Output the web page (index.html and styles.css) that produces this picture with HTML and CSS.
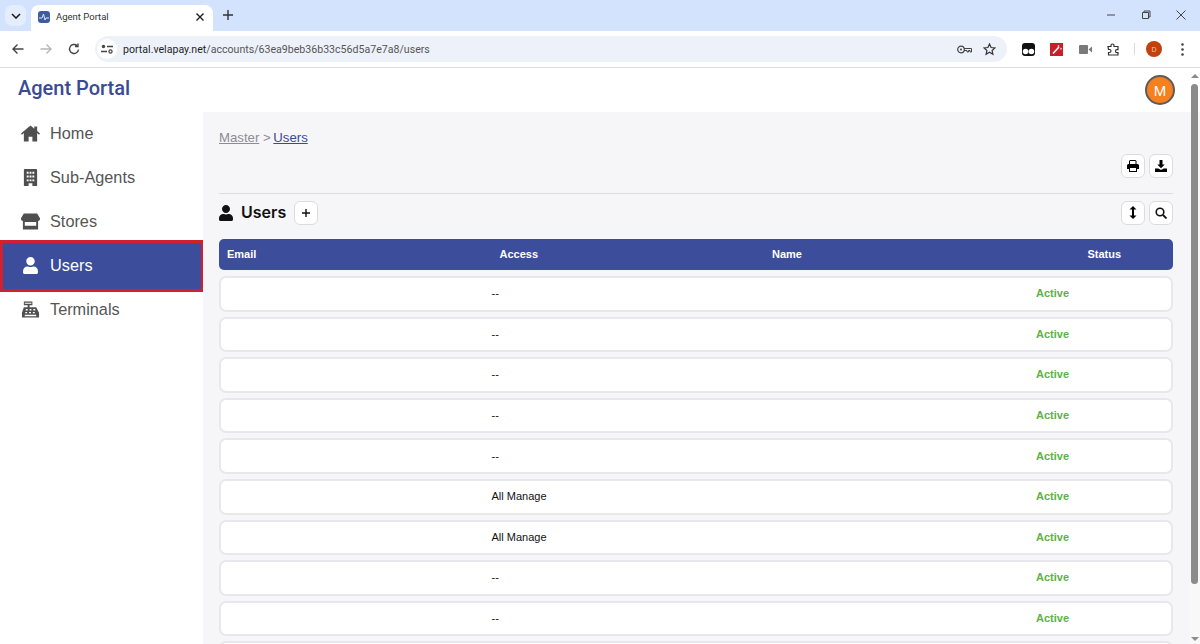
FILE: index.html
```html
<!DOCTYPE html>
<html lang="en">
<head>
  <meta charset="UTF-8">
  <title>Agent Portal</title>
  <link rel="stylesheet" href="styles.css">
</head>
<body>
  <svg class="defs" width="0" height="0">
    <symbol id="i-user" viewBox="0 0 448 512"><path d="M224 256c70.7 0 128-57.3 128-128S294.7 0 224 0 96 57.3 96 128s57.3 128 128 128zm89.6 32h-16.7c-22.2 10.2-46.9 16-72.9 16s-50.6-5.8-72.9-16h-16.7C60.2 288 0 348.2 0 422.4V464c0 26.5 21.5 48 48 48h352c26.5 0 48-21.5 48-48v-41.6c0-74.2-60.2-134.4-134.4-134.4z"/></symbol>
  </svg>

  <!-- Browser chrome -->
  <div class="tabstrip">
    <div class="tab-menu">
      <svg width="10" height="6" viewBox="0 0 10 6"><path d="M1 1l4 4 4-4" fill="none" stroke="#1f1f1f" stroke-width="1.6"/></svg>
    </div>
    <div class="tab">
      <span class="favicon"><svg width="12" height="12" viewBox="0 0 12 12"><path d="M1 7h3l1.500-4 1.500 6 1-2h3" fill="none" stroke="#dfe8f8" stroke-width="1"/></svg></span>
      <span class="tab-title">Agent Portal</span>
      <svg class="tab-close" width="10" height="10" viewBox="0 0 10 10"><path d="M1.500 1.500l7 7m0-7l-7 7" stroke="#1f1f1f" stroke-width="1.400"/></svg>
    </div>
    <svg class="new-tab" width="10" height="10" viewBox="0 0 10 10"><path d="M5 0v10M0 5h10" stroke="#333" stroke-width="1.400"/></svg>
    <div class="window-btns">
      <svg width="10" height="10" viewBox="0 0 10 10"><path d="M1 5h8" stroke="#444" stroke-width="1"/></svg>
      <svg width="10" height="10" viewBox="0 0 10 10"><path d="M1.500 2.500h6v6h-6zM3 2.500V1h6v6H7.500" fill="none" stroke="#444" stroke-width="1"/></svg>
      <svg width="10" height="10" viewBox="0 0 10 10"><path d="M.5.500l9 9m0-9l-9 9" stroke="#444" stroke-width="1"/></svg>
    </div>
  </div>

  <div class="toolbar">
    <svg class="nav-icon" width="12" height="12" viewBox="0 0 12 12"><path d="M11.500 6H1M5.500 1.500L1 6l4.500 4.500" fill="none" stroke="#444" stroke-width="1.400"/></svg>
    <svg class="nav-icon" width="12" height="12" viewBox="0 0 12 12"><path d="M.5 6H11M6.500 1.500L11 6l-4.500 4.500" fill="none" stroke="#b4b6b9" stroke-width="1.400"/></svg>
    <svg class="nav-icon" width="12" height="12" viewBox="0 0 12 12"><path d="M10.500 6.500A4.500 4.500 0 1 1 9 2.600M10 .5v3H7" fill="none" stroke="#444" stroke-width="1.400"/></svg>
    <div class="omnibox">
      <span class="site-info">
        <svg width="12" height="10" viewBox="0 0 12 10"><circle cx="2.500" cy="2.500" r="1.700" fill="#444"/><path d="M6 2.500h6M0 7.500h6" stroke="#444" stroke-width="1.300"/><circle cx="9.500" cy="7.500" r="1.600" fill="none" stroke="#444" stroke-width="1.200"/></svg>
      </span>
      <span class="url"><span class="url-host">portal.velapay.net</span>/accounts/63ea9beb36b33c56d5a7e7a8/users</span>
      <svg class="key" width="15" height="9" viewBox="0 0 15 9"><circle cx="4" cy="4.500" r="3.300" fill="none" stroke="#444" stroke-width="1.200"/><circle cx="4" cy="4.500" r="1" fill="#444"/><path d="M7 3.500h7.500v3.500h-1.500V5.500h-1.500v1.500H10V5.500H7" fill="none" stroke="#444" stroke-width="1"/></svg>
      <svg class="star" width="13" height="13" viewBox="0 0 13 13"><path d="M6.500 1l1.600 3.500 3.900.4-2.900 2.600.8 3.800-3.400-2-3.400 2 .8-3.800L1 4.900l3.900-.4z" fill="none" stroke="#333" stroke-width="1.200"/></svg>
    </div>
    <div class="extensions">
      <svg width="13" height="13" viewBox="0 0 13 13"><path d="M3 0h7a3 3 0 0 1 3 3v7a3 3 0 0 1-3 3H3a3 3 0 0 1-3-3V3a3 3 0 0 1 3-3z" fill="#111"/><circle cx="3.600" cy="8.500" r="2.800" fill="#fff"/><circle cx="9.400" cy="8.500" r="2.800" fill="#fff"/></svg>
      <svg width="13" height="13" viewBox="0 0 13 13"><rect width="13" height="13" fill="#c8202b"/><path d="M3 10.500L9 4M8 2.500l1 1M10.500 5.500l1 .5" stroke="#fff" stroke-width="1.500"/></svg>
      <svg width="13" height="9" viewBox="0 0 13 9"><rect width="9" height="9" rx="1" fill="#7a7a7a"/><path d="M9.500 4.500L13 1.500v6z" fill="#7a7a7a"/></svg>
      <svg width="13" height="13" viewBox="0 0 13 13"><path d="M1 3.500h3V2.500a1.500 1.500 0 0 1 3 0v1h4v3.200h-1a1.500 1.500 0 0 0 0 3h1V12H1.500V9.500h1a1.500 1.500 0 0 0 0-3h-1z" fill="none" stroke="#333" stroke-width="1.200"/></svg>
      <span class="ext-sep"></span>
      <span class="chrome-avatar">D</span>
      <svg class="chrome-menu" width="3" height="13" viewBox="0 0 3 13"><circle cx="1.500" cy="1.500" r="1.300" fill="#444"/><circle cx="1.500" cy="6.500" r="1.300" fill="#444"/><circle cx="1.500" cy="11.500" r="1.300" fill="#444"/></svg>
    </div>
  </div>

  <!-- Page -->
  <div class="page">
    <header class="topbar">
      <div class="brand">Agent Portal</div>
      <div class="avatar">M</div>
    </header>
    <div class="layout">
      <nav class="sidebar">
        <a class="nav-item">
          <svg class="nav-svg" viewBox="0 0 20 17"><path d="M10 0L0 8.500l1 1.200L3 8v9h5v-5h4v5h5V8l2 1.700 1-1.200-3-2.600V1h-3v2.400z"/></svg>
          Home
        </a>
        <a class="nav-item">
          <svg class="nav-svg" viewBox="0 0 20 18"><path fill-rule="evenodd" d="M4 0h12a1 1 0 0 1 1 1v17h-5v-3H8v3H3V1a1 1 0 0 1 1-1zm2 3v2h2V3zm3 0v2h2V3zm3 0v2h2V3zM6 7v2h2V7zm3 0v2h2V7zm3 0v2h2V7zM6 11v2h2v-2zm6 0v2h2v-2zm-3 0v2h2v-2z"/></svg>
          Sub-Agents
        </a>
        <a class="nav-item">
          <svg class="nav-svg" viewBox="0 0 20 17"><path fill-rule="evenodd" d="M3 0h14l3 5v1a2.500 2.500 0 0 1-2 2v9H2V8a2.500 2.500 0 0 1-2-2V5zm1 9v4h12V9z"/></svg>
          Stores
        </a>
        <a class="nav-item active">
          <svg class="nav-svg"><use href="#i-user"/></svg>
          Users
        </a>
        <a class="nav-item">
          <svg class="nav-svg" viewBox="0 0 20 17"><path fill-rule="evenodd" d="M3 0h9v4H9v2h7l3 6v5H1v-5l2-6h4V4H3zm1 1.500v1h7v-1zM5 8v1.500h2V8zm4 0v1.500h2V8zm4 0v1.500h2V8zM4.500 11v1.500h2V11zm4 0v1.500h2V11zm4 0v1.500h2V11zM4 14v1.500h12V14z"/></svg>
          Terminals
        </a>
      </nav>

      <main class="content">
        <div class="breadcrumb"><a class="crumb-master">Master</a> &gt; <a class="crumb-current">Users</a></div>
        <div class="page-actions">
          <button class="icon-btn">
            <svg width="12" height="12" viewBox="0 0 12 12"><path fill-rule="evenodd" d="M3 0h5.500L9.500 1v3h1A1.500 1.500 0 0 1 12 5.500V9h-2v3H2V9H0V5.500A1.500 1.500 0 0 1 1.500 4h.5V1zm0 1v3h5.500V1zm0 7v3h6V8z"/></svg>
          </button>
          <button class="icon-btn">
            <svg width="12" height="12" viewBox="0 0 12 12"><path d="M4.500 0h3v4.500h2.200L6 8.300 2.300 4.500h2.200zM0 8.500h3.300L6 10l2.700-1.500H12V12H0z"/></svg>
          </button>
        </div>
        <div class="section-head">
          <svg class="section-icon"><use href="#i-user"/></svg>
          <h2>Users</h2>
          <button class="icon-btn">
            <svg width="8" height="8" viewBox="0 0 8 8"><path d="M4 0v8M0 4h8" stroke="#111" stroke-width="1.400"/></svg>
          </button>
          <div class="section-tools">
            <button class="icon-btn">
              <svg width="8" height="13" viewBox="0 0 8 13"><path d="M4 0l3.500 3.500H5v6h2.500L4 13 .5 9.500H3v-6H.5z"/></svg>
            </button>
            <button class="icon-btn">
              <svg width="12" height="12" viewBox="0 0 12 12"><circle cx="5" cy="5" r="3.800" fill="none" stroke="#111" stroke-width="1.600"/><path d="M8 8l3.500 3.500" stroke="#111" stroke-width="1.800"/></svg>
            </button>
          </div>
        </div>

        <div class="table-head">
          <span>Email</span><span>Access</span><span>Name</span><span class="col-status">Status</span>
        </div>
        <div class="row"><span></span><span class="access">--</span><span></span><span class="status">Active</span></div>
        <div class="row"><span></span><span class="access">--</span><span></span><span class="status">Active</span></div>
        <div class="row"><span></span><span class="access">--</span><span></span><span class="status">Active</span></div>
        <div class="row"><span></span><span class="access">--</span><span></span><span class="status">Active</span></div>
        <div class="row"><span></span><span class="access">--</span><span></span><span class="status">Active</span></div>
        <div class="row"><span></span><span class="access">All Manage</span><span></span><span class="status">Active</span></div>
        <div class="row"><span></span><span class="access">All Manage</span><span></span><span class="status">Active</span></div>
        <div class="row"><span></span><span class="access">--</span><span></span><span class="status">Active</span></div>
        <div class="row"><span></span><span class="access">--</span><span></span><span class="status">Active</span></div>
        <div class="row"></div>
      </main>

      <div class="scrollbar">
        <span class="arrow-up"></span>
        <span class="thumb"></span>
        <span class="arrow-down"></span>
      </div>
    </div>
  </div>
</body>
</html>
```

FILE: styles.css
```css
html, body {
  margin: 0;
  height: 644px;
  overflow: hidden;
}

body {
  font-family: 'Liberation Sans', Arial, sans-serif;
  background-color: #fff;
  color: #111;
}

.defs {
  display: none;
}

/* Browser chrome */
.tabstrip {
  display: flex;
  align-items: flex-end;
  height: 31px;
  background-color: #d3e3fd;
  padding-left: 5px;
  box-sizing: border-box;
}

.tab-menu {
  display: flex;
  align-items: center;
  justify-content: center;
  width: 21px;
  height: 21px;
  margin-bottom: 5px;
  border-radius: 7px;
  background-color: #e4edfc;
}

.tab {
  display: flex;
  align-items: center;
  width: 182px;
  height: 26px;
  margin-left: 5px;
  padding: 0 8px 3px 7px;
  box-sizing: border-box;
  background-color: #fff;
  border-radius: 8px 8px 0 0;
}

.favicon {
  display: flex;
  align-items: center;
  justify-content: center;
  width: 12px;
  height: 12px;
  border-radius: 3px;
  background-color: #3f5c9e;
}

.tab-title {
  flex: 1;
  margin-left: 6px;
  font-family: 'Roboto', sans-serif;
  font-size: 9.5px;
  color: #333;
}

.new-tab {
  margin: 0 0 11px 10px;
}

.window-btns {
  display: flex;
  gap: 25px;
  margin: 0 14px 11px auto;
}

.toolbar {
  display: flex;
  align-items: center;
  height: 37px;
  padding-left: 12px;
  box-sizing: border-box;
  background-color: #fff;
  border-bottom: 1px solid #dadce0;
}

.nav-icon {
  flex: none;
  margin-right: 16px;
}

.omnibox {
  display: flex;
  align-items: center;
  flex: none;
  width: 912px;
  height: 26px;
  margin-left: -1px;
  border-radius: 13px;
  background-color: #edf2fa;
}

.site-info {
  display: flex;
  align-items: center;
  justify-content: center;
  width: 20px;
  height: 20px;
  margin: 0 6px 0 2px;
  border-radius: 50%;
  background-color: #fff;
}

.url {
  flex: 1;
  font-family: 'Roboto', sans-serif;
  font-size: 10.6px;
  color: #555;
}

.url-host {
  color: #1f1f1f;
}

.key {
  margin-right: 11px;
}

.star {
  margin-right: 11.5px;
}

.extensions {
  display: flex;
  align-items: center;
  gap: 15.5px;
  margin-left: 14.5px;
}

.ext-sep {
  width: 1px;
  height: 12px;
  margin: 0 -2px;
  background-color: #d5dbe3;
}

.chrome-avatar {
  display: flex;
  align-items: center;
  justify-content: center;
  width: 16px;
  height: 16px;
  margin-left: -2px;
  border-radius: 50%;
  font-size: 7px;
  color: #f3c9a8;
  background-color: #c2410c;
}

.chrome-menu {
  margin-left: 3px;
}

/* Page */
.page {
  position: relative;
}

.topbar {
  display: flex;
  align-items: center;
  justify-content: space-between;
  height: 44px;
  padding: 0 25px 0 18px;
  box-sizing: border-box;
}

.brand {
  margin-bottom: 5px;
  font-family: 'Roboto', sans-serif;
  font-size: 20px;
  font-weight: 500;
  color: #3b4a94;
}

.avatar {
  display: flex;
  align-items: center;
  justify-content: center;
  width: 26px;
  height: 26px;
  border: 2px solid #5d5a58;
  border-radius: 50%;
  font-size: 15px;
  color: #fff;
  background-color: #f58020;
}

.layout {
  display: flex;
  height: 532px;
}

.sidebar {
  flex: none;
  width: 203px;
  margin-top: -1px;
  box-sizing: border-box;
}

.nav-item {
  display: flex;
  align-items: center;
  height: 44px;
  padding-left: 21px;
  font-size: 16.3px;
  color: #555;
  box-sizing: border-box;
}

.nav-svg {
  flex: none;
  width: 19px;
  height: 17px;
  margin-right: 10px;
  fill: #4f4f4f;
}

.nav-item.active {
  width: 204px;
  height: 52px;
  margin: -3px 0 -5px;
  border: 3px solid #d1202f;
  color: #fff;
  background-color: #3b4d9b;
  padding: 0 0 2px 18px;
}

.nav-item.active .nav-svg {
  fill: #fff;
}

.content {
  flex: 1;
  min-width: 0;
  overflow: hidden;
  padding: 18px 17px 0 16px;
  background-color: #f6f6f9;
}

.breadcrumb {
  height: 23px;
  padding-top: 1px;
  line-height: 14px;
  font-size: 13.2px;
  color: #8c8c95;
}

.crumb-master {
  text-decoration: underline;
}

.crumb-current {
  margin-left: -1px;
  color: #3b4a94;
  text-decoration: underline;
}

.page-actions {
  display: flex;
  justify-content: flex-end;
  gap: 4px;
  height: 39px;
  border-bottom: 1px solid #dcdcdf;
}

.icon-btn {
  display: flex;
  align-items: center;
  justify-content: center;
  width: 24px;
  height: 24px;
  padding: 0;
  border: 1px solid #dcdcdf;
  border-radius: 6px;
  background-color: #fff;
}

.section-head {
  display: flex;
  align-items: center;
  height: 37px;
  margin-bottom: 8px;
}

.section-icon {
  width: 14px;
  height: 16px;
  fill: #111;
}

.section-head h2 {
  margin: 0 8px 2px 8px;
  font-family: 'Inter', sans-serif;
  font-size: 16px;
  font-weight: 600;
}

.section-tools {
  display: flex;
  gap: 4px;
  margin-left: auto;
}

.table-head, .row {
  display: grid;
  grid-template-columns: 272.5px 272.5px 272.5px 1fr;
  align-items: center;
}

.table-head {
  height: 31px;
  margin-bottom: 6px;
  padding: 0 0 1px 8px;
  box-sizing: border-box;
  border-radius: 5px;
  font-size: 11px;
  font-weight: 700;
  color: #fff;
  background-color: #3b4d9b;
}

.col-status {
  padding-left: 43px;
}

.row {
  height: 35.6px;
  margin-bottom: 5px;
  padding: 0 0 1px 8px;
  box-sizing: border-box;
  border: 2px solid #e8e8ec;
  border-radius: 7px;
  font-size: 11px;
  color: #111;
  background-color: #fff;
}

.access {
  margin-left: -10px;
}

.status {
  margin-left: -10.5px;
  font-size: 11px;
  font-weight: 700;
  color: #5cb246;
}

/* Scrollbar */
.scrollbar {
  flex: none;
  position: relative;
  width: 10px;
  background-color: #f8f8f8;
}

.thumb {
  position: absolute;
  left: 1px;
  top: -28px;
  width: 7px;
  height: 500px;
  border-radius: 4px;
  background-color: #8b8b8b;
}

.arrow-up, .arrow-down {
  position: absolute;
  left: 1px;
  width: 0;
  height: 0;
  border-left: 4px solid transparent;
  border-right: 4px solid transparent;
}

.arrow-up {
  top: -38px;
  border-bottom: 4px solid #8b8b8b;
}

.arrow-down {
  bottom: 3px;
  border-top: 4px solid #8b8b8b;
}
```
